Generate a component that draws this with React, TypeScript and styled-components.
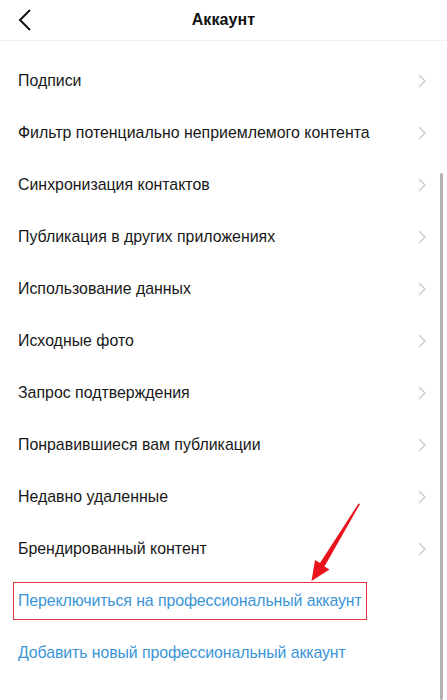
import * as React from "react";
import styled, { createGlobalStyle } from "styled-components";

const GlobalStyle = createGlobalStyle`
  html, body {
    margin: 0;
    padding: 0;
    background: #ffffff;
  }
  body {
    font-family: "Liberation Sans", Arial, sans-serif;
    -webkit-font-smoothing: antialiased;
  }
`;

const Screen = styled.div`
  position: relative;
  width: 447px;
  height: 700px;
  overflow: hidden;
  background: #ffffff;
`;

const Header = styled.header`
  display: grid;
  grid-template-columns: 60px 1fr 60px;
  align-items: center;
  height: 40px;
  border-bottom: 1px solid #efefef;
`;

const BackButton = styled.button`
  display: flex;
  align-items: center;
  justify-content: flex-start;
  padding: 0 0 0 17px;
  height: 40px;
  border: none;
  background: none;
  cursor: pointer;
`;

const Title = styled.h1`
  margin: 0;
  text-align: center;
  font-size: 16px;
  font-weight: 700;
  color: #111111;
  letter-spacing: 0.1px;
`;

const List = styled.ul`
  margin: 0;
  padding: 14px 0 0;
  list-style: none;
`;

const Row = styled.li`
  display: flex;
  align-items: center;
  justify-content: space-between;
  height: 52px;
  padding: 0 20px 0 18px;
`;

const Label = styled.span<{ $link?: boolean; $marked?: boolean }>`
  display: inline-block;
  font-size: 15.9px;
  color: ${(p) => (p.$link ? "#3a95d6" : "#181818")};
  letter-spacing: ${(p) => (p.$link ? "-0.1px" : "0")};
  padding: ${(p) => (p.$marked ? "9px 4px 9px 4px" : "0")};
  margin-left: ${(p) => (p.$marked ? "-5px" : "0")};
  border: ${(p) => (p.$marked ? "1px solid #e3323b" : "none")};
`;

const ScrollThumb = styled.div`
  position: absolute;
  right: 4px;
  top: 173px;
  bottom: 0;
  width: 3px;
  border-radius: 2px;
  background: #b3b3b3;
`;

const Pointer = styled.svg`
  position: absolute;
  left: 300px;
  top: 500px;
  width: 70px;
  height: 90px;
`;

const Chevron = () => (
  <svg width="10" height="16" viewBox="0 0 10 16">
    <path d="M2 2 L8 8 L2 14" fill="none" stroke="#c9c9cc" strokeWidth="1.3" />
  </svg>
);

const items = [
  "Подписи",
  "Фильтр потенциально неприемлемого контента",
  "Синхронизация контактов",
  "Публикация в других приложениях",
  "Использование данных",
  "Исходные фото",
  "Запрос подтверждения",
  "Понравившиеся вам публикации",
  "Недавно удаленные",
  "Брендированный контент",
];

export default function App() {
  return (
    <Screen>
      <GlobalStyle />
      <Header>
        <BackButton aria-label="Назад">
          <svg width="16" height="24" viewBox="0 0 16 24">
            <path d="M13 2 L3 12 L13 22" fill="none" stroke="#111" strokeWidth="2" />
          </svg>
        </BackButton>
        <Title>Аккаунт</Title>
        <span />
      </Header>
      <List>
        {items.map((item) => (
          <Row key={item}>
            <Label>{item}</Label>
            <Chevron />
          </Row>
        ))}
        <Row>
          <Label $link $marked>
            Переключиться на профессиональный аккаунт
          </Label>
        </Row>
        <Row>
          <Label $link>Добавить новый профессиональный аккаунт</Label>
        </Row>
      </List>
      <ScrollThumb />
      <Pointer viewBox="300 500 70 90">
        <polygon
          points="360,504 324.5,566.5 329.5,569.5 311.5,581 315,560 320,563 358.5,503.5"
          fill="#e8131b"
        />
      </Pointer>
    </Screen>
  );
}
